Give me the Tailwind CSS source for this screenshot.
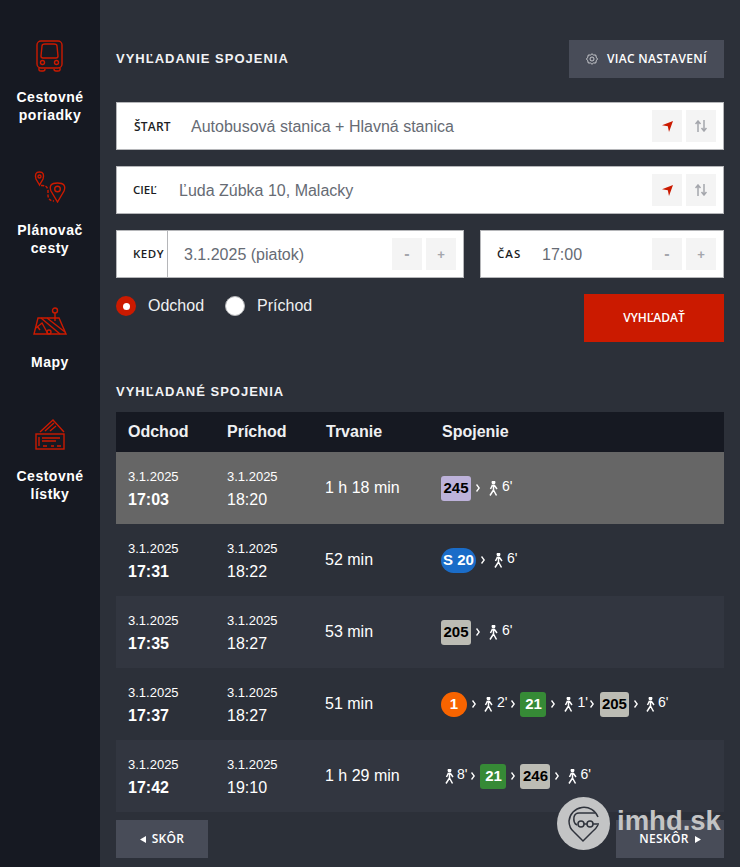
<!doctype html>
<html>
  <head>
    <meta charset="UTF-8">
    <title>Vyhľadanie spojenia - imhd.sk</title>
    <script src="https://cdn.jsdelivr.net/npm/@tailwindcss/browser@4"></script>
  </head>
  <body class="bg-[#2c3039] font-['Liberation_Sans',sans-serif]">
    <div class="relative flex h-[867px] w-[740px] overflow-hidden">
      <!-- sidebar -->
      <nav class="flex w-[100px] shrink-0 flex-col items-center bg-[#161922] pt-[40px] text-center text-[14px] leading-[18px] font-bold tracking-[0.5px] text-white">
        <svg class="h-[32px] w-[28px]" viewBox="0 0 28 32" fill="none" stroke="#cb1a00" stroke-width="1.400">
          <rect x="1" y="1" width="25" height="27" rx="4"></rect>
          <path d="M5 16 L6 6 Q6 4 9 4 H18 Q21 4 21 6 L22 16 Q22 18 20 18 H7 Q5 18 5 16Z"></path>
          <circle cx="6.500" cy="22.500" r="2"></circle>
          <circle cx="20.500" cy="22.500" r="2"></circle>
          <path d="M3 28 V30 Q3 31 5 31 H7 Q9 31 9 29 M18 29 Q18 31 20 31 H22 Q24 31 24 30 V28"></path>
        </svg>
        <div class="mt-[16px] h-[36px]">Cestovné<br>poriadky</div>
        <svg class="mt-[47px] h-[32px] w-[32px]" viewBox="0 0 32 32" fill="none" stroke="#cb1a00" stroke-width="1.400">
          <path d="M5.500 14 L2 8 Q0 1 5.500 1 Q11 1 9 8Z"></path>
          <circle cx="5.500" cy="5.500" r="1.500"></circle>
          <path d="M7 14.500 Q13 14 14 19 V25 Q15 30 20 30" stroke-dasharray="3 1.500"></path>
          <path d="M23.500 31 L17 20 Q14 12 23.500 12 Q33 12 30 20Z"></path>
          <circle cx="23.500" cy="18" r="2.800"></circle>
        </svg>
        <div class="mt-[18px] h-[36px]">Plánovač<br>cesty</div>
        <svg class="mt-[50px] h-[28px] w-[34px]" viewBox="0 0 34 28" fill="none" stroke="#cb1a00" stroke-width="1.400">
          <circle cx="22" cy="3.500" r="2.500"></circle>
          <path d="M22 6 V14"></path>
          <path d="M5 11 H26 L33 27 H1Z"></path>
          <path d="M8 11 L27 27 M14 11 L32 25 M3 21 L9 16 L15 27 M4 19 L7 23"></path>
          <circle cx="16" cy="25" r="2"></circle>
        </svg>
        <div class="mt-[18px] h-[18px]">Mapy</div>
        <svg class="mt-[48px] h-[32px] w-[32px]" viewBox="0 0 32 32" fill="none" stroke="#cb1a00" stroke-width="1.400">
          <path d="M6 13 L19 1 L30 13 M11 12 L20 4 M16 12 L22 7"></path>
          <rect x="2" y="15" width="28" height="15"></rect>
          <path d="M5 18 V27 M8 19 H26 M8 22 H22"></path>
          <path d="M9 27 H13 M17 27 H20 M23 27 H27"></path>
        </svg>
        <div class="mt-[16px]">Cestovné<br>lístky</div>
      </nav>

      <main class="flex-1 pt-[40px] pr-[16px] pl-[16px]">
        <div class="flex h-[38px] items-center justify-between">
          <h2 class="text-[13px] font-bold tracking-[1px] text-[#f2f3f5]">VYHĽADANIE SPOJENIA</h2>
          <button class="flex h-[38px] w-[155px] items-center justify-center gap-[9px] bg-[#484c58] font-['Open_Sans',sans-serif] text-[12px] font-semibold tracking-[0.3px] text-white">
            <svg class="h-[12px] w-[12px]" viewBox="0 0 24 24" fill="none" stroke="#d5d6d9" stroke-width="1.800">
              <path d="M12 1.500 L15 4 L19.500 4 L20.500 8.500 L23 12 L20.500 15.500 L19.500 20 L15 20 L12 22.500 L9 20 L4.500 20 L3.500 15.500 L1 12 L3.500 8.500 L4.500 4 L9 4Z" stroke-linejoin="round"></path>
              <circle cx="12" cy="12" r="4"></circle>
            </svg>
            VIAC NASTAVENÍ
          </button>
        </div>

        <!-- start -->
        <div class="mt-[24px] flex h-[48px] items-center border border-[#b5b6b9] bg-white pr-[7px]">
          <span class="mt-[2px] ml-[17px] w-[57px] font-['Open_Sans',sans-serif] text-[12px] font-semibold tracking-[0.2px] text-[#1b1d24]">ŠTART</span>
          <span class="mt-[2px] flex-1 text-[16px] text-[#666b74]">Autobusová stanica + Hlavná stanica</span>
          <div class="flex gap-[4px]">
            <span class="flex h-[32px] w-[30px] items-center justify-center bg-[#f4f4f4]">
              <svg class="h-[11px] w-[11px]" viewBox="0 0 11 11"><path d="M11 0 L7 11 L5.800 5.200 L0 4.200Z" fill="#cb1a00"></path></svg>
            </span>
            <span class="flex h-[32px] w-[30px] items-center justify-center bg-[#f4f4f4]">
              <svg class="h-[12px] w-[12px]" viewBox="0 0 12 12" fill="none" stroke="#a4a6ac" stroke-width="1.500"><path d="M3 12 V2 M0.500 4 L3 1 L5.500 4 M9 0 V10 M6.500 8 L9 11 L11.500 8"></path></svg>
            </span>
          </div>
        </div>

        <!-- ciel -->
        <div class="mt-[16px] flex h-[48px] items-center border border-[#b5b6b9] bg-white pr-[7px]">
          <span class="ml-[16px] w-[46px] font-['Open_Sans',sans-serif] text-[11.500px] font-semibold text-[#1b1d24]">CIEĽ</span>
          <span class="mt-[2px] flex-1 text-[16px] text-[#666b74]">Ľuda Zúbka 10, Malacky</span>
          <div class="flex gap-[4px]">
            <span class="flex h-[32px] w-[30px] items-center justify-center bg-[#f4f4f4]">
              <svg class="h-[11px] w-[11px]" viewBox="0 0 11 11"><path d="M11 0 L7 11 L5.800 5.200 L0 4.200Z" fill="#cb1a00"></path></svg>
            </span>
            <span class="flex h-[32px] w-[30px] items-center justify-center bg-[#f4f4f4]">
              <svg class="h-[12px] w-[12px]" viewBox="0 0 12 12" fill="none" stroke="#a4a6ac" stroke-width="1.500"><path d="M3 12 V2 M0.500 4 L3 1 L5.500 4 M9 0 V10 M6.500 8 L9 11 L11.500 8"></path></svg>
            </span>
          </div>
        </div>

        <!-- kedy / cas -->
        <div class="mt-[16px] flex gap-[16px]">
          <div class="flex h-[48px] w-[348px] items-center border border-[#b5b6b9] bg-white pr-[7px]">
            <span class="flex h-full w-[51px] items-center justify-end border-r border-[#b5b6b9] pr-[3px] font-['Open_Sans',sans-serif] text-[11.500px] font-semibold tracking-[0.5px] text-[#1b1d24]">KEDY</span>
            <span class="mt-[2px] flex-1 pl-[16px] text-[16px] text-[#666b74]">3.1.2025 (piatok)</span>
            <div class="flex gap-[4px]">
              <span class="flex h-[32px] w-[30px] items-center justify-center bg-[#f4f4f4] text-[16px] leading-none font-bold text-[#a4a6ac]">-</span>
              <span class="flex h-[32px] w-[30px] items-center justify-center bg-[#f4f4f4] text-[13px] leading-none font-bold text-[#a4a6ac]">+</span>
            </div>
          </div>
          <div class="flex h-[48px] w-[244px] items-center border border-[#b5b6b9] bg-white pr-[7px]">
            <span class="ml-[16px] w-[45px] font-['Open_Sans',sans-serif] text-[11.500px] font-semibold tracking-[1px] text-[#1b1d24]">ČAS</span>
            <span class="mt-[2px] flex-1 text-[16px] text-[#666b74]">17:00</span>
            <div class="flex gap-[4px]">
              <span class="flex h-[32px] w-[30px] items-center justify-center bg-[#f4f4f4] text-[16px] leading-none font-bold text-[#a4a6ac]">-</span>
              <span class="flex h-[32px] w-[30px] items-center justify-center bg-[#f4f4f4] text-[13px] leading-none font-bold text-[#a4a6ac]">+</span>
            </div>
          </div>
        </div>

        <!-- radios + search -->
        <div class="mt-[16px] flex items-start justify-between">
          <div class="mt-[2px] flex h-[20px] items-center text-[16px] leading-[20px] text-[#eff0f2]">
            <span class="flex h-[20px] w-[20px] items-center justify-center rounded-full bg-[#cb1a00]"><span class="h-[7px] w-[7px] rounded-full bg-white"></span></span>
            <span class="ml-[12px]">Odchod</span>
            <span class="ml-[21px] h-[20px] w-[20px] rounded-full border border-[#b5b6b9] bg-white"></span>
            <span class="ml-[12px]">Príchod</span>
          </div>
          <button class="h-[48px] w-[140px] bg-[#cb1a00] font-['Open_Sans',sans-serif] text-[12px] font-semibold text-white">VYHĽADAŤ</button>
        </div>

        <h2 class="mt-[42px] h-[16px] text-[13px] leading-[16px] font-bold tracking-[1px] text-[#f2f3f5]">VYHĽADANÉ SPOJENIA</h2>

        <!-- results table -->
        <div class="mt-[12px]">
          <div class="grid h-[40px] grid-cols-[99px_99px_116px_1fr] items-center bg-[#161922] pl-[12px] text-[16px] font-bold text-[#eff0f2]">
            <span>Odchod</span><span>Príchod</span><span>Trvanie</span><span>Spojenie</span>
          </div>

          <div class="grid h-[72px] grid-cols-[99px_99px_116px_1fr] items-center bg-[#666666] pl-[12px] text-white">
            <div class="pt-[2px]"><div class="text-[13px] leading-[16px]">3.1.2025</div><div class="mt-[6px] text-[16px] leading-[18px] font-bold">17:03</div></div>
            <div class="pt-[2px]"><div class="text-[13px] leading-[16px]">3.1.2025</div><div class="mt-[6px] text-[16px] leading-[18px]">18:20</div></div>
            <div class="-ml-[1px] text-[16px]">1 h 18 min</div>
            <div class="-ml-[1px] flex items-center text-[14px]">
              <span class="flex h-[25px] w-[30px] items-center justify-center rounded-[3px] bg-[#bdb2da] text-[15px] font-bold text-black">245</span>
              <svg class="ml-[5px] h-[8px] w-[4px]" viewBox="0 0 4 8" fill="none" stroke="#fff" stroke-width="1.400"><path d="M0.500 0.500 L3.200 4 L0.500 7.500"></path></svg>
              <svg class="ml-[9px] h-[15px] w-[9px]" viewBox="0 0 9 15" fill="none" stroke="#fff" stroke-width="1.500"><circle cx="4.500" cy="1.500" r="1.200" fill="#fff"></circle><path d="M2.500 4.500 H5.500 L8 8 M4.500 4.500 V9 L1 14.500 M4.500 9 L7.500 14.500 M3 5 L1.500 8"></path></svg>
              <span class="mb-[3px] ml-[4px]">6'</span>
            </div>
          </div>

          <div class="grid h-[72px] grid-cols-[99px_99px_116px_1fr] items-center bg-[#2c3039] pl-[12px] text-white">
            <div class="pt-[2px]"><div class="text-[13px] leading-[16px]">3.1.2025</div><div class="mt-[6px] text-[16px] leading-[18px] font-bold">17:31</div></div>
            <div class="pt-[2px]"><div class="text-[13px] leading-[16px]">3.1.2025</div><div class="mt-[6px] text-[16px] leading-[18px]">18:22</div></div>
            <div class="-ml-[1px] text-[16px]">52 min</div>
            <div class="-ml-[1px] flex items-center text-[14px]">
              <span class="flex h-[25px] w-[35px] items-center justify-center rounded-full bg-[#1a6cc8] text-[15px] font-bold text-white">S 20</span>
              <svg class="ml-[5px] h-[8px] w-[4px]" viewBox="0 0 4 8" fill="none" stroke="#fff" stroke-width="1.400"><path d="M0.500 0.500 L3.200 4 L0.500 7.500"></path></svg>
              <svg class="ml-[9px] h-[15px] w-[9px]" viewBox="0 0 9 15" fill="none" stroke="#fff" stroke-width="1.500"><circle cx="4.500" cy="1.500" r="1.200" fill="#fff"></circle><path d="M2.500 4.500 H5.500 L8 8 M4.500 4.500 V9 L1 14.500 M4.500 9 L7.500 14.500 M3 5 L1.500 8"></path></svg>
              <span class="mb-[3px] ml-[4px]">6'</span>
            </div>
          </div>

          <div class="grid h-[72px] grid-cols-[99px_99px_116px_1fr] items-center bg-[#323640] pl-[12px] text-white">
            <div class="pt-[2px]"><div class="text-[13px] leading-[16px]">3.1.2025</div><div class="mt-[6px] text-[16px] leading-[18px] font-bold">17:35</div></div>
            <div class="pt-[2px]"><div class="text-[13px] leading-[16px]">3.1.2025</div><div class="mt-[6px] text-[16px] leading-[18px]">18:27</div></div>
            <div class="-ml-[1px] text-[16px]">53 min</div>
            <div class="-ml-[1px] flex items-center text-[14px]">
              <span class="flex h-[25px] w-[30px] items-center justify-center rounded-[3px] bg-[#bcbcb4] text-[15px] font-bold text-black">205</span>
              <svg class="ml-[5px] h-[8px] w-[4px]" viewBox="0 0 4 8" fill="none" stroke="#fff" stroke-width="1.400"><path d="M0.500 0.500 L3.200 4 L0.500 7.500"></path></svg>
              <svg class="ml-[9px] h-[15px] w-[9px]" viewBox="0 0 9 15" fill="none" stroke="#fff" stroke-width="1.500"><circle cx="4.500" cy="1.500" r="1.200" fill="#fff"></circle><path d="M2.500 4.500 H5.500 L8 8 M4.500 4.500 V9 L1 14.500 M4.500 9 L7.500 14.500 M3 5 L1.500 8"></path></svg>
              <span class="mb-[3px] ml-[4px]">6'</span>
            </div>
          </div>

          <div class="grid h-[72px] grid-cols-[99px_99px_116px_1fr] items-center bg-[#2c3039] pl-[12px] text-white">
            <div class="pt-[2px]"><div class="text-[13px] leading-[16px]">3.1.2025</div><div class="mt-[6px] text-[16px] leading-[18px] font-bold">17:37</div></div>
            <div class="pt-[2px]"><div class="text-[13px] leading-[16px]">3.1.2025</div><div class="mt-[6px] text-[16px] leading-[18px]">18:27</div></div>
            <div class="-ml-[1px] text-[16px]">51 min</div>
            <div class="-ml-[1px] flex items-center text-[14px]">
              <span class="flex h-[25px] w-[26px] items-center justify-center rounded-full bg-[#f86400] text-[15px] font-bold text-white">1</span>
              <svg class="ml-[5px] h-[8px] w-[4px]" viewBox="0 0 4 8" fill="none" stroke="#fff" stroke-width="1.400"><path d="M0.500 0.500 L3.200 4 L0.500 7.500"></path></svg>
              <svg class="ml-[8px] h-[15px] w-[9px]" viewBox="0 0 9 15" fill="none" stroke="#fff" stroke-width="1.500"><circle cx="4.500" cy="1.500" r="1.200" fill="#fff"></circle><path d="M2.500 4.500 H5.500 L8 8 M4.500 4.500 V9 L1 14.500 M4.500 9 L7.500 14.500 M3 5 L1.500 8"></path></svg>
              <span class="mb-[3px] ml-[4px]">2'</span>
              <svg class="ml-[4px] h-[8px] w-[4px]" viewBox="0 0 4 8" fill="none" stroke="#fff" stroke-width="1.400"><path d="M0.500 0.500 L3.200 4 L0.500 7.500"></path></svg>
              <span class="ml-[5px] flex h-[25px] w-[26px] items-center justify-center rounded-[3px] bg-[#368a36] text-[15px] font-bold text-white">21</span>
              <svg class="ml-[5px] h-[8px] w-[4px]" viewBox="0 0 4 8" fill="none" stroke="#fff" stroke-width="1.400"><path d="M0.500 0.500 L3.200 4 L0.500 7.500"></path></svg>
              <svg class="ml-[9px] h-[15px] w-[9px]" viewBox="0 0 9 15" fill="none" stroke="#fff" stroke-width="1.500"><circle cx="4.500" cy="1.500" r="1.200" fill="#fff"></circle><path d="M2.500 4.500 H5.500 L8 8 M4.500 4.500 V9 L1 14.500 M4.500 9 L7.500 14.500 M3 5 L1.500 8"></path></svg>
              <span class="mb-[3px] ml-[4px]">1'</span>
              <svg class="ml-[2px] h-[8px] w-[4px]" viewBox="0 0 4 8" fill="none" stroke="#fff" stroke-width="1.400"><path d="M0.500 0.500 L3.200 4 L0.500 7.500"></path></svg>
              <span class="ml-[6px] flex h-[25px] w-[29px] items-center justify-center rounded-[3px] bg-[#bcbcb4] text-[15px] font-bold text-black">205</span>
              <svg class="ml-[5px] h-[8px] w-[4px]" viewBox="0 0 4 8" fill="none" stroke="#fff" stroke-width="1.400"><path d="M0.500 0.500 L3.200 4 L0.500 7.500"></path></svg>
              <svg class="ml-[8px] h-[15px] w-[9px]" viewBox="0 0 9 15" fill="none" stroke="#fff" stroke-width="1.500"><circle cx="4.500" cy="1.500" r="1.200" fill="#fff"></circle><path d="M2.500 4.500 H5.500 L8 8 M4.500 4.500 V9 L1 14.500 M4.500 9 L7.500 14.500 M3 5 L1.500 8"></path></svg>
              <span class="mb-[3px] ml-[3px]">6'</span>
            </div>
          </div>

          <div class="grid h-[72px] grid-cols-[99px_99px_116px_1fr] items-center bg-[#323640] pl-[12px] text-white">
            <div class="pt-[2px]"><div class="text-[13px] leading-[16px]">3.1.2025</div><div class="mt-[6px] text-[16px] leading-[18px] font-bold">17:42</div></div>
            <div class="pt-[2px]"><div class="text-[13px] leading-[16px]">3.1.2025</div><div class="mt-[6px] text-[16px] leading-[18px]">19:10</div></div>
            <div class="-ml-[1px] text-[16px]">1 h 29 min</div>
            <div class="-ml-[1px] flex items-center text-[14px]">
              <svg class="ml-[4px] h-[15px] w-[9px]" viewBox="0 0 9 15" fill="none" stroke="#fff" stroke-width="1.500"><circle cx="4.500" cy="1.500" r="1.200" fill="#fff"></circle><path d="M2.500 4.500 H5.500 L8 8 M4.500 4.500 V9 L1 14.500 M4.500 9 L7.500 14.500 M3 5 L1.500 8"></path></svg>
              <span class="mb-[3px] ml-[3px]">8'</span>
              <svg class="ml-[4px] h-[8px] w-[4px]" viewBox="0 0 4 8" fill="none" stroke="#fff" stroke-width="1.400"><path d="M0.500 0.500 L3.200 4 L0.500 7.500"></path></svg>
              <span class="ml-[5px] flex h-[25px] w-[26px] items-center justify-center rounded-[3px] bg-[#368a36] text-[15px] font-bold text-white">21</span>
              <svg class="ml-[5px] h-[8px] w-[4px]" viewBox="0 0 4 8" fill="none" stroke="#fff" stroke-width="1.400"><path d="M0.500 0.500 L3.200 4 L0.500 7.500"></path></svg>
              <span class="ml-[5px] flex h-[25px] w-[30px] items-center justify-center rounded-[3px] bg-[#bcbcb4] text-[15px] font-bold text-black">246</span>
              <svg class="ml-[5px] h-[8px] w-[4px]" viewBox="0 0 4 8" fill="none" stroke="#fff" stroke-width="1.400"><path d="M0.500 0.500 L3.200 4 L0.500 7.500"></path></svg>
              <svg class="ml-[9px] h-[15px] w-[9px]" viewBox="0 0 9 15" fill="none" stroke="#fff" stroke-width="1.500"><circle cx="4.500" cy="1.500" r="1.200" fill="#fff"></circle><path d="M2.500 4.500 H5.500 L8 8 M4.500 4.500 V9 L1 14.500 M4.500 9 L7.500 14.500 M3 5 L1.500 8"></path></svg>
              <span class="mb-[3px] ml-[3px]">6'</span>
            </div>
          </div>
        </div>

        <!-- paging -->
        <div class="mt-[8px] flex justify-between font-['Open_Sans',sans-serif] text-[12px] font-semibold tracking-[0.3px] text-white">
          <button class="flex h-[38px] w-[92px] items-center justify-center gap-[6px] bg-[#484c58]">
            <svg class="h-[7px] w-[6px]" viewBox="0 0 6 7"><path d="M6 0 V7 L0 3.500Z" fill="#fff"></path></svg>
            SKÔR
          </button>
          <button class="flex h-[38px] w-[108px] items-center justify-center gap-[6px] bg-[#484c58]">
            NESKÔR
            <svg class="h-[7px] w-[6px]" viewBox="0 0 6 7"><path d="M0 0 V7 L6 3.500Z" fill="#fff"></path></svg>
          </button>
        </div>
      </main>

      <!-- watermark -->
      <div class="absolute top-[797px] left-[557px] flex items-center">
        <svg class="h-[53px] w-[53px]" viewBox="0 0 53 53">
          <circle cx="26.500" cy="26.500" r="26.500" fill="#c3c4c5"></circle>
          <g fill="none" stroke="#2f333c" stroke-width="1.500">
            <path d="M41 20 A15 15 0 0 0 12 24 Q12 31 17 35 L26 44 L35 35 Q39 32 41 28"></path>
            <path d="M20 28 Q16 26 17 20 Q18 16 22 16 H38"></path>
            <circle cx="24" cy="27" r="3"></circle>
            <circle cx="33" cy="27" r="3"></circle>
            <path d="M27 27 H30 M36 27 H42"></path>
          </g>
        </svg>
        <span class="mb-[6px] ml-[7px] text-[27.500px] leading-none font-bold text-[#c3c4c5]">imhd.sk</span>
      </div>
    </div>
  </body>
</html>
